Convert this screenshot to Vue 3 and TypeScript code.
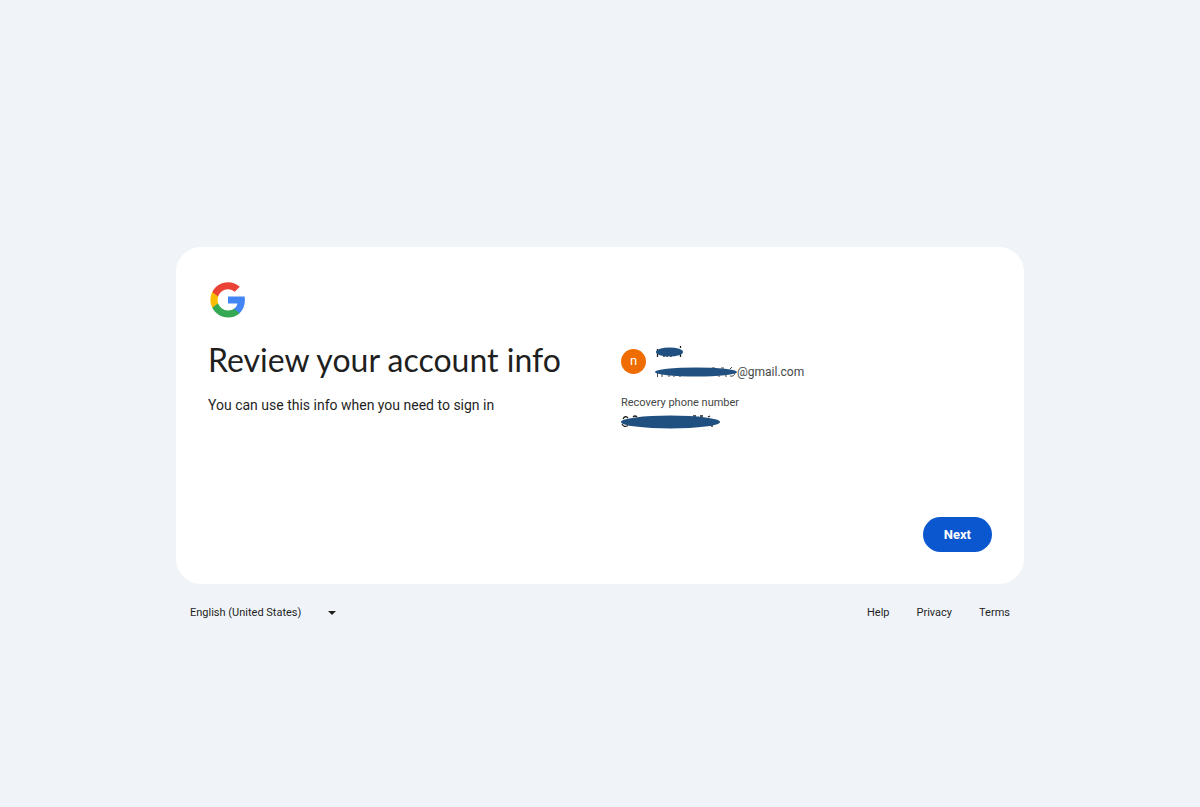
<script setup lang="ts">
import { ref } from 'vue'

const languages: string[] = ['English (United States)']
const language = ref<string>(languages[0])
const footerLinks: string[] = ['Help', 'Privacy', 'Terms']
</script>

<template>
  <div class="page">
    <div class="shell">
      <main class="card">
        <svg class="logo" viewBox="-1 -2 50 50" role="img" aria-label="Google">
          <path fill="#4285F4" d="M45.12 24.5c0-1.56-.14-3.06-.4-4.5H24v8.51h11.84c-.51 2.75-2.06 5.08-4.39 6.64v5.52h7.11c4.16-3.83 6.56-9.47 6.56-16.17z" />
          <path fill="#34A853" d="M24 46c5.94 0 10.92-1.97 14.56-5.33l-7.11-5.52c-1.97 1.32-4.49 2.1-7.45 2.1-5.73 0-10.58-3.87-12.31-9.07H4.34v5.7C7.96 41.07 15.4 46 24 46z" />
          <path fill="#FBBC04" d="M11.69 28.18C11.25 26.86 11 25.45 11 24s.25-2.86.69-4.18v-5.7H4.34C2.85 17.09 2 20.45 2 24s.85 6.91 2.34 9.88l7.35-5.7z" />
          <path fill="#EA4335" d="M24 10.75c3.23 0 6.13 1.11 8.41 3.29l6.31-6.31C34.91 4.18 29.93 2 24 2 15.4 2 7.96 6.93 4.34 14.12l7.35 5.7c1.73-5.2 6.58-9.07 12.31-9.07z" />
        </svg>
        <div class="columns">
          <section class="intro">
            <h1>Review your account info</h1>
            <p>You can use this info when you need to sign in</p>
          </section>
          <section class="details">
            <div class="account">
              <span class="avatar">n</span>
              <div class="identity">
                <svg class="name-mask" viewBox="0 0 30 14" role="img" aria-label="Name hidden">
                  <path d="M2.5 4v8M9 10v2M12 11v1M16 11v1M25.5 1v2M25.5 8v4" stroke="#1f1f1f" stroke-width="1.3" />
                  <ellipse cx="14.5" cy="7" rx="13.5" ry="4.5" fill="#205080" />
                </svg>
                <div class="email">
                  <svg class="email-mask" viewBox="0 0 82 14" role="img" aria-label="Address hidden">
                    <path d="M2.5 8v4M7 9v3M14 10v2M19 10v2M25 11v1M57 3h3M66 3h3M63 11h2M70 11h2M75 4l2-2M75 11q4 1 5-3" fill="none" stroke="#444746" />
                    <ellipse cx="41" cy="7" rx="41" ry="4.5" fill="#205080" />
                  </svg>
                  <span>@gmail.com</span>
                </div>
              </div>
            </div>
            <p class="label">Recovery phone number</p>
            <svg class="phone-mask" viewBox="0 0 100 16" role="img" aria-label="Phone number hidden">
              <path d="M7 4q-3-3-5 1M1 10q2 4 6 1.500M12 3q2-2 4 0M27 3v1M72 2h3M79 2h3M87 3l2-1M91 11v2" fill="none" stroke="#1f1f1f" stroke-width="1.3" />
              <ellipse cx="49.5" cy="8" rx="49.5" ry="6.5" fill="#205080" />
            </svg>
          </section>
        </div>
        <div class="actions">
          <button type="button">Next</button>
        </div>
      </main>
      <footer class="footer">
        <div class="language">
          <select v-model="language" aria-label="Language">
            <option v-for="item in languages" :key="item">{{ item }}</option>
          </select>
          <svg class="arrow" viewBox="0 0 8 4" aria-hidden="true"><path d="M0 0h8L4 4z" fill="#1f1f1f" /></svg>
        </div>
        <nav>
          <a v-for="link in footerLinks" :key="link" href="#">{{ link }}</a>
        </nav>
      </footer>
    </div>
  </div>
</template>

<style>
body {
  margin: 0;
  background: #f0f4f9;
}
</style>

<style scoped>
.page {
  box-sizing: border-box;
  min-height: 100vh;
  padding: 82px 24px 0;
  display: flex;
  align-items: center;
  justify-content: center;
  font-family: Roboto, "Liberation Sans", sans-serif;
  color: #1f1f1f;
}
.shell {
  width: 100%;
  max-width: 848px;
}
.card {
  padding: 32px;
  border-radius: 25px;
  background: #fff;
}
.logo {
  display: block;
  width: 40px;
  height: 40px;
}
.columns {
  display: grid;
  grid-template-columns: 1fr 1fr;
  gap: 42px;
  padding-top: 19px;
}
h1 {
  margin: 0;
  font-family: Lato, sans-serif;
  font-size: 32px;
  font-weight: 400;
  line-height: 44px;
  white-space: nowrap;
}
.intro p {
  margin: 13px 0 0;
  font-size: 14px;
  line-height: 20px;
}
.account {
  display: flex;
  align-items: center;
  gap: 9px;
  height: 46px;
}
.avatar {
  width: 25px;
  height: 25px;
  border-radius: 50%;
  background: #ef6c00;
  color: #fff;
  font-size: 13px;
  line-height: 24px;
  text-align: center;
}
.identity {
  padding-top: 4px;
}
.identity svg,
.phone-mask {
  display: block;
}
.name-mask {
  width: 30px;
  height: 14px;
}
.email {
  display: flex;
  align-items: center;
  margin-top: 4px;
  color: #444746;
  font-size: 12px;
  line-height: 18px;
}
.email-mask {
  width: 82px;
  height: 14px;
}
.label {
  margin: 11px 0 0;
  color: #444746;
  font-size: 11px;
  line-height: 16px;
}
.phone-mask {
  width: 100px;
  height: 16px;
  margin-top: 3px;
}
.actions {
  display: flex;
  justify-content: flex-end;
  padding-top: 87px;
}
button {
  height: 35px;
  padding: 0 21px;
  border: 0;
  border-radius: 18px;
  background: #0b57d0;
  color: #fff;
  font: 700 13px/20px Roboto, sans-serif;
}
.footer {
  display: flex;
  justify-content: space-between;
  align-items: center;
  padding: 19px 14px;
  font-size: 11px;
  line-height: 20px;
}
.language {
  position: relative;
  display: flex;
  align-items: center;
}
select {
  appearance: none;
  width: 152px;
  padding: 0;
  border: 0;
  background: transparent;
  color: inherit;
  font: inherit;
}
.arrow {
  position: absolute;
  right: 6px;
  width: 8px;
  height: 4px;
  pointer-events: none;
}
nav {
  display: flex;
  gap: 27px;
}
a {
  color: inherit;
  text-decoration: none;
}
</style>
